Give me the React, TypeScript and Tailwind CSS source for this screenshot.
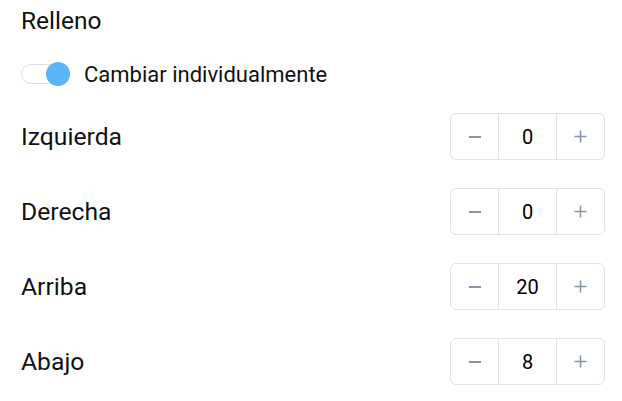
import React, { useState } from "react";

interface StepperRowProps {
  label: string;
  value: number;
}

const StepperRow = ({ label, value }: StepperRowProps) => {
  const [val, setVal] = useState(value);
  return (
    <div className="flex items-center justify-between h-[47px]">
      <span className="text-[24.7px] text-[#111]">{label}</span>
      <div className="flex h-[47px] w-[155px] border border-[#e2e2e2] rounded-[6px] bg-white">
        <button
          className="w-[48px] flex items-center justify-center border-r border-[#e2e2e2]"
          onClick={() => setVal(val - 1)}
        >
          <span className="block w-[12px] h-[2px] bg-[#8696a8]" />
        </button>
        <div className="flex-1 flex items-center justify-center text-[20px] text-[#000]">
          {val}
        </div>
        <button
          className="w-[48px] flex items-center justify-center border-l border-[#e2e2e2]"
          onClick={() => setVal(val + 1)}
        >
          <svg width="13" height="13" viewBox="0 0 13 13">
            <path d="M6.5 0.5v12M0.5 6.5h12" stroke="#8696a8" strokeWidth="1.6" />
          </svg>
        </button>
      </div>
    </div>
  );
};

export default function App() {
  const [on, setOn] = useState(true);
  return (
    <div
      className="w-[622px] h-[401px] bg-white pl-[21px] pr-[17px] pt-[6px]"
      style={{ fontFamily: "Roboto, 'Noto Sans', sans-serif" }}
    >
      <h2 className="text-[24.5px] text-[#111] leading-[30px]">Relleno</h2>
      <div className="flex items-center gap-[14px] mt-[25px] h-[26px]">
        <button
          className="relative w-[49px] h-[20px] rounded-full border border-[#e0e0e0] bg-white"
          onClick={() => setOn(!on)}
        >
          <span
            className={`absolute top-[-3px] w-[24px] h-[24px] rounded-full bg-[#5ab5f9] ${
              on ? "right-[-1px]" : "left-[-1px]"
            }`}
          />
        </button>
        <span className="text-[22px] text-[#111]">Cambiar individualmente</span>
      </div>
      <div className="flex flex-col gap-[28px] mt-[26px]">
        <StepperRow label="Izquierda" value={0} />
        <StepperRow label="Derecha" value={0} />
        <StepperRow label="Arriba" value={20} />
        <StepperRow label="Abajo" value={8} />
      </div>
    </div>
  );
}
